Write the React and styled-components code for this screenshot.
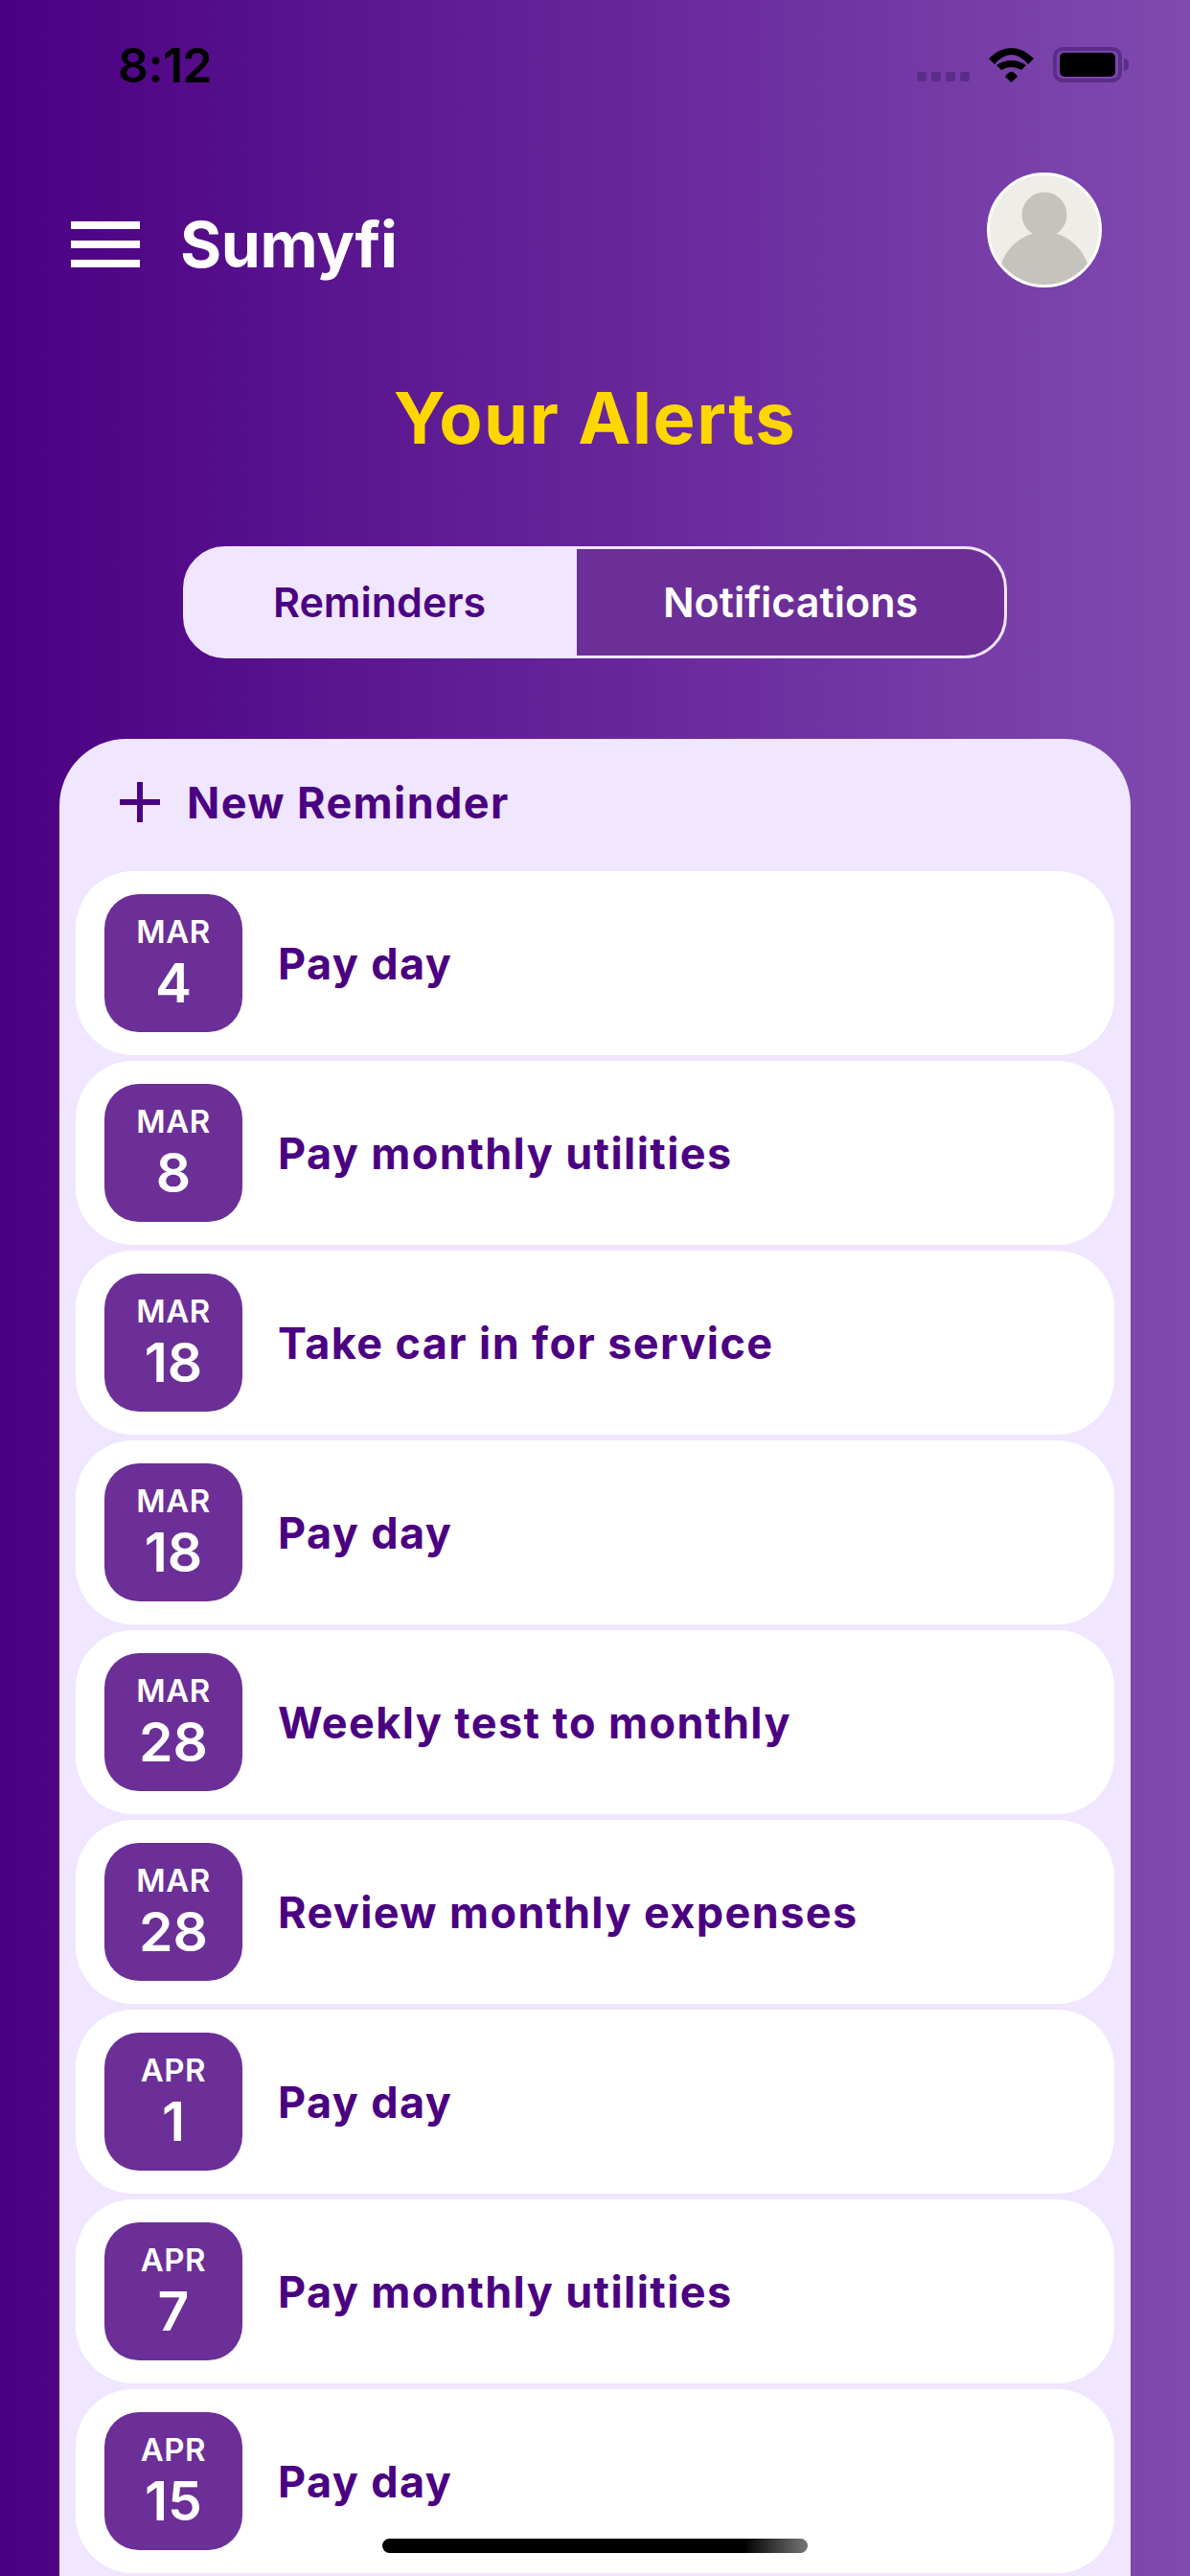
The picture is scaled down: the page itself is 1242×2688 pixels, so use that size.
import styled, { createGlobalStyle } from "styled-components";

const GlobalStyle = createGlobalStyle`
  html, body {
    margin: 0;
    padding: 0;
    background: #4b0082;
  }
  * {
    box-sizing: border-box;
  }
`;

const Page = styled.div`
  position: relative;
  width: 1242px;
  height: 2688px;
  overflow: hidden;
  font-family: Inter, "Liberation Sans", sans-serif;
  background: linear-gradient(90deg, #4b0082 0%, #804ab0 100%);
`;

const StatusBar = styled.div`
  height: 180px;
  padding: 43px 64px 0 123px;
  display: flex;
  justify-content: space-between;
  align-items: flex-start;
`;

const Clock = styled.div`
  font-size: 50px;
  line-height: 50px;
  font-weight: 600;
  color: #000;
  letter-spacing: -0.5px;
`;

const StatusIcons = styled.div`
  display: flex;
  align-items: flex-end;
  padding-top: 6px;
`;

const SignalDots = styled.div`
  display: flex;
  gap: 5px;
  margin: 0 20px 1px 0;
`;

const SignalDot = styled.span`
  width: 10px;
  height: 10px;
  border-radius: 3px;
  background: #5a2d88;
`;

const Battery = styled.div`
  display: flex;
  align-items: center;
  margin-left: 20px;
`;

const BatteryBody = styled.div`
  width: 72px;
  height: 37px;
  border: 4px solid #5a2d88;
  border-radius: 10px;
  padding: 2px 3px;
`;

const BatteryFill = styled.div`
  height: 100%;
  background: #000;
  border-radius: 5px;
`;

const BatteryCap = styled.div`
  width: 5px;
  height: 13px;
  margin-left: 2px;
  background: #5a2d88;
  border-radius: 0 5px 5px 0;
`;

const Header = styled.div`
  height: 120px;
  padding: 0 92px 0 74px;
  display: flex;
  align-items: center;
  justify-content: space-between;
`;

const HeaderLeft = styled.div`
  display: flex;
  align-items: center;
  padding-top: 30px;
`;

const Burger = styled.div`
  width: 72px;
  display: flex;
  flex-direction: column;
  gap: 12px;
  margin-right: 42px;
`;

const BurgerBar = styled.span`
  height: 8px;
  background: #fff;
`;

const Brand = styled.div`
  font-size: 66px;
  line-height: 66px;
  font-weight: 700;
  color: #fff;
  letter-spacing: -0.4px;
`;

const Avatar = styled.div`
  width: 120px;
  height: 120px;
  border-radius: 50%;
  border: 3px solid #fff;
  background: #efede8;
  overflow: hidden;
`;

const Title = styled.h1`
  margin: 99px 0 0;
  text-align: center;
  font-size: 74px;
  line-height: 74px;
  font-weight: 700;
  letter-spacing: 1.5px;
  color: #ffd700;
`;

const Tabs = styled.div`
  margin: 97px auto 0;
  width: 860px;
  height: 117px;
  display: flex;
  background: #f0e6ff;
  border: 3px solid #f0e6ff;
  border-radius: 44px;
`;

const Tab = styled.div`
  flex: ${(p) => (p.$active ? "0 0 408px" : "1")};
  display: flex;
  align-items: center;
  justify-content: center;
  padding: 0 ${(p) => (p.$active ? "4px" : "0")} 2px 0;
  font-size: 43px;
  font-weight: 600;
  color: ${(p) => (p.$active ? "#4b0082" : "#fff")};
  background: ${(p) => (p.$active ? "#f0e6ff" : "#6b2f97")};
  border-radius: ${(p) => (p.$active ? "41px 0 0 41px" : "0 41px 41px 0")};
`;

const Panel = styled.div`
  margin: 84px 62px 0;
  padding: 0 17px;
  background: #f0e6ff;
  border-radius: 70px 70px 0 0;
  height: 1940px;
`;

const NewReminder = styled.div`
  height: 138px;
  padding: 0 0 6px 46px;
  display: flex;
  align-items: center;
  gap: 28px;
  font-size: 45px;
  font-weight: 700;
  letter-spacing: 1.4px;
  color: #4b0082;
`;

const List = styled.div`
  display: flex;
  flex-direction: column;
  gap: 6px;
`;

const Card = styled.div`
  height: 192px;
  padding: 0 30px;
  display: flex;
  align-items: center;
  gap: 37px;
  background: #fff;
  border-radius: 60px;
`;

const DateBadge = styled.div`
  width: 144px;
  height: 144px;
  padding-top: 19px;
  flex: none;
  display: flex;
  flex-direction: column;
  align-items: center;
  background: #6b2f97;
  border-radius: 36px;
  color: #fff;
`;

const Month = styled.div`
  font-size: 33px;
  line-height: 40px;
  font-weight: 600;
  letter-spacing: 0.5px;
`;

const Day = styled.div`
  margin-top: 2px;
  font-size: 57px;
  line-height: 63px;
  font-weight: 600;
`;

const CardTitle = styled.div`
  font-size: 45px;
  font-weight: 700;
  letter-spacing: 1.4px;
  color: #4b0082;
`;

const HomeIndicator = styled.div`
  position: absolute;
  left: 399px;
  top: 2649px;
  width: 444px;
  height: 15px;
  border-radius: 8px;
  background: linear-gradient(90deg, #000 0%, #000 85%, #777 100%);
`;

const reminders = [
  { month: "MAR", day: 4, title: "Pay day" },
  { month: "MAR", day: 8, title: "Pay monthly utilities" },
  { month: "MAR", day: 18, title: "Take car in for service" },
  { month: "MAR", day: 18, title: "Pay day" },
  { month: "MAR", day: 28, title: "Weekly test to monthly" },
  { month: "MAR", day: 28, title: "Review monthly expenses" },
  { month: "APR", day: 1, title: "Pay day" },
  { month: "APR", day: 7, title: "Pay monthly utilities" },
  { month: "APR", day: 15, title: "Pay day" },
];

const WifiIcon = () => (
  <svg width="47" height="36" viewBox="0 0 47 36">
    <path d="M0 11 Q23.5 -11 47 11 L41 17 Q23.5 -3 6 17 Z" fill="#000" />
    <path d="M8 18 Q23.5 8 39 18 L34 23 Q23.5 17 13 23 Z" fill="#000" />
    <path d="M17 30 Q23.5 20 30 30 L23.5 36 Z" fill="#000" />
  </svg>
);

const PersonIcon = () => (
  <svg width="114" height="114" viewBox="0 0 114 114">
    <circle cx="57" cy="41" r="23.5" fill="#c5c3bd" />
    <ellipse cx="57" cy="110" rx="48" ry="51" fill="#c5c3bd" />
  </svg>
);

const PlusIcon = () => (
  <svg width="42" height="42" viewBox="0 0 42 42">
    <path d="M21 0 V42 M0 21 H42" stroke="#4b0082" strokeWidth="6" fill="none" />
  </svg>
);

const App = () => {
  return (
    <Page>
      <GlobalStyle />
      <StatusBar>
        <Clock>8:12</Clock>
        <StatusIcons>
          <SignalDots>
            <SignalDot />
            <SignalDot />
            <SignalDot />
            <SignalDot />
          </SignalDots>
          <WifiIcon />
          <Battery>
            <BatteryBody>
              <BatteryFill />
            </BatteryBody>
            <BatteryCap />
          </Battery>
        </StatusIcons>
      </StatusBar>
      <Header>
        <HeaderLeft>
          <Burger>
            <BurgerBar />
            <BurgerBar />
            <BurgerBar />
          </Burger>
          <Brand>Sumyfi</Brand>
        </HeaderLeft>
        <Avatar>
          <PersonIcon />
        </Avatar>
      </Header>
      <Title>Your Alerts</Title>
      <Tabs>
        <Tab $active>Reminders</Tab>
        <Tab>Notifications</Tab>
      </Tabs>
      <Panel>
        <NewReminder>
          <PlusIcon />
          New Reminder
        </NewReminder>
        <List>
          {reminders.map((item, i) => (
            <Card key={i}>
              <DateBadge>
                <Month>{item.month}</Month>
                <Day>{item.day}</Day>
              </DateBadge>
              <CardTitle>{item.title}</CardTitle>
            </Card>
          ))}
        </List>
      </Panel>
      <HomeIndicator />
    </Page>
  );
};

export default App;
